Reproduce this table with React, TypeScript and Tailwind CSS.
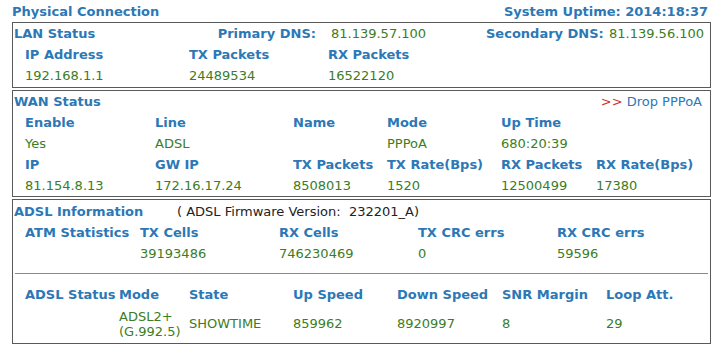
const blue = "text-[#2c78b6]";
const green = "text-[#3b7d23]";

function Label({ children }: { children?: React.ReactNode }) {
  return <div className={`font-bold ${blue} whitespace-nowrap`}>{children}</div>;
}

function Value({ children }: { children?: React.ReactNode }) {
  return <div className={`${green} whitespace-nowrap`}>{children}</div>;
}

export default function App() {
  return (
    <div
      className="w-[727px] h-[356px] bg-white text-[13px] leading-[21px] overflow-hidden"
      style={{ fontFamily: '"DejaVu Sans", Verdana, sans-serif' }}
    >
      <div className="flex justify-between pl-3 pr-[19px] pt-[1px] h-[22px]">
        <Label>Physical Connection</Label>
        <Label>System Uptime: 2014:18:37</Label>
      </div>

      {/* LAN */}
      <div className="ml-3 w-[699px] border border-[#5a5a5a]">
        <div className="flex items-center h-[21px] pl-[1px]">
          <div className="w-[200px]"><Label>LAN Status</Label></div>
          <div className="w-[102px] flex justify-end"><Label>Primary DNS:</Label></div>
          <div className="w-[170px] pl-[15px]"><Value>81.139.57.100</Value></div>
          <div className="w-[123px]"><Label>Secondary DNS:</Label></div>
          <Value>81.139.56.100</Value>
        </div>
        <div className="grid grid-cols-[164px_139px_1fr] pl-3 h-[21px]">
          <Label>IP Address</Label>
          <Label>TX Packets</Label>
          <Label>RX Packets</Label>
        </div>
        <div className="grid grid-cols-[164px_139px_1fr] pl-3 h-[22px]">
          <Value>192.168.1.1</Value>
          <Value>24489534</Value>
          <Value>16522120</Value>
        </div>
      </div>

      {/* WAN */}
      <div className="ml-3 mt-[2px] w-[699px] border border-[#5a5a5a]">
        <div className="flex justify-between items-center h-[21px] pl-[1px] pr-[8px]">
          <Label>WAN Status</Label>
          <div className="text-[#2c78b6] whitespace-nowrap">
            <span className="text-[#d0312d]">&gt;&gt; </span>Drop PPPoA
          </div>
        </div>
        <div className="grid grid-cols-[130px_138px_94px_114px_95px_1fr] pl-3">
          <Label>Enable</Label>
          <Label>Line</Label>
          <Label>Name</Label>
          <Label>Mode</Label>
          <Label>Up Time</Label>
          <div />
          <Value>Yes</Value>
          <Value>ADSL</Value>
          <Value></Value>
          <Value>PPPoA</Value>
          <Value>680:20:39</Value>
          <div />
          <Label>IP</Label>
          <Label>GW IP</Label>
          <Label>TX Packets</Label>
          <Label>TX Rate(Bps)</Label>
          <Label>RX Packets</Label>
          <Label>RX Rate(Bps)</Label>
          <Value>81.154.8.13</Value>
          <Value>172.16.17.24</Value>
          <Value>8508013</Value>
          <Value>1520</Value>
          <Value>12500499</Value>
          <Value>17380</Value>
        </div>
      </div>

      {/* ADSL */}
      <div className="ml-3 mt-[2px] w-[699px] border border-[#5a5a5a] pb-[1px]">
        <div className="flex items-center h-[22px] pl-[1px]">
          <div className="w-[163px]"><Label>ADSL Information</Label></div>
          <div className="text-[#222] whitespace-pre">( ADSL Firmware Version:  232201_A)</div>
        </div>
        <div className="grid grid-cols-[115px_139px_139px_139px_1fr] pl-3">
          <Label>ATM Statistics</Label>
          <Label>TX Cells</Label>
          <Label>RX Cells</Label>
          <Label>TX CRC errs</Label>
          <Label>RX CRC errs</Label>
          <div />
          <Value>39193486</Value>
          <Value>746230469</Value>
          <Value>0</Value>
          <Value>59596</Value>
        </div>
        <div className="h-[9px]" />
        <div className="mx-[2px] border-t border-[#8a8a8a]" />
        <div className="h-[10px]" />
        <div className="grid grid-cols-[94px_70px_104px_104px_105px_104px_1fr] pl-3 items-center">
          <Label>ADSL Status</Label>
          <Label>Mode</Label>
          <Label>State</Label>
          <Label>Up Speed</Label>
          <Label>Down Speed</Label>
          <Label>SNR Margin</Label>
          <Label>Loop Att.</Label>
          <div className="h-[37px]" />
          <div className={`${green} leading-[15px] whitespace-nowrap pt-[1px]`}>
            ADSL2+
            <br />
            (G.992.5)
          </div>
          <Value>SHOWTIME</Value>
          <Value>859962</Value>
          <Value>8920997</Value>
          <Value>8</Value>
          <Value>29</Value>
        </div>
      </div>
    </div>
  );
}
